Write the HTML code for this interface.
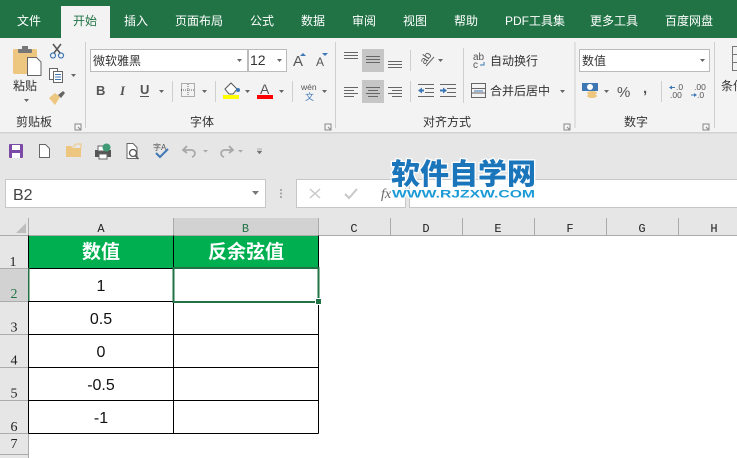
<!DOCTYPE html>
<html><head><meta charset="utf-8"><style>
html,body{margin:0;padding:0;width:737px;height:458px;overflow:hidden;background:#fff}
svg{display:block;font-family:"Liberation Sans","Noto Sans CJK SC",sans-serif}
.t{fill:#fff;font-size:12px}
.l{fill:#333;font-size:12px}
.h{fill:#222;font-family:"Liberation Mono",monospace;font-size:12px;text-anchor:middle}
.r{fill:#222;font-family:"Liberation Serif",serif;font-size:14px;text-anchor:middle}
.c{fill:#111;font-size:16px;text-anchor:middle}
.g{fill:#666}
.s{stroke:#666;stroke-width:1;fill:none}
</style></head><body>
<svg width="737" height="458" viewBox="0 0 737 458" xmlns="http://www.w3.org/2000/svg">
<!-- tabs -->
<rect width="737" height="38" fill="#217346"/>
<rect x="61" y="6" width="49" height="32" fill="#f3f3f3"/>
<text class="t" x="17" y="25">文件</text>
<text class="t" x="73" y="25" style="fill:#217346">开始</text>
<text class="t" x="124" y="25">插入</text>
<text class="t" x="175" y="25">页面布局</text>
<text class="t" x="250" y="25">公式</text>
<text class="t" x="301" y="25">数据</text>
<text class="t" x="352" y="25">审阅</text>
<text class="t" x="403" y="25">视图</text>
<text class="t" x="454" y="25">帮助</text>
<text class="t" x="505" y="25">PDF工具集</text>
<text class="t" x="590" y="25">更多工具</text>
<text class="t" x="665" y="25">百度网盘</text>
<!-- ribbon -->
<rect y="38" width="737" height="94" fill="#f3f3f3"/>
<rect y="132" width="737" height="86" fill="#e6e6e6"/>
<rect y="132" width="737" height="1.500" fill="#d2d2d2"/>
<g fill="#cfcfcf">
<rect x="85" y="42" width="1" height="86"/><rect x="335" y="42" width="1" height="86"/><rect x="574.500" y="42" width="1" height="86"/><rect x="714" y="42" width="1" height="86"/>
<rect x="410" y="50" width="1" height="21"/><rect x="410" y="81" width="1" height="21"/><rect x="463" y="48" width="1" height="55"/>
<rect x="172" y="81" width="1" height="21"/><rect x="215" y="81" width="1" height="21"/><rect x="292" y="81" width="1" height="21"/><rect x="661" y="81" width="1" height="21"/>
</g>
<!-- clipboard -->
<rect x="13" y="49" width="24" height="25" rx="1.500" fill="#edc77f"/>
<rect x="18" y="49" width="14" height="4" rx="1" fill="#777"/><rect x="22" y="46" width="6" height="4" fill="#777"/>
<path d="M27.500 57.500h9l4.500 4.500v13.500H27.500z" fill="#fff" stroke="#666"/>
<text class="l" x="13" y="90">粘贴</text>
<path d="M24 99h5l-2.500 3z" class="g"/>
<circle cx="53" cy="55.500" r="2.500" fill="none" stroke="#3f77b5" stroke-width="1.200"/><circle cx="61" cy="55.500" r="2.500" fill="none" stroke="#3f77b5" stroke-width="1.200"/>
<path d="M54 53l7-9M60 53l-7-9" stroke="#555" stroke-width="1.500" fill="none"/>
<rect x="49.500" y="68.500" width="8" height="11" fill="#fff" stroke="#666"/><rect x="53.500" y="71.500" width="9" height="11" fill="#fff" stroke="#666"/>
<path d="M55 74.500h6M55 77h6M55 79.500h6" stroke="#3f77b5"/>
<path d="M71 74h5l-2.500 3z" class="g"/>
<path d="M49 98l6-5 5 4-5 8z" fill="#edc77f"/><path d="M58 95l5-4 2 2-4 5z" fill="#666"/>
<text class="l" x="16" y="126">剪贴板</text>
<path d="M75 124h6v6h-6zM78 127l3 3" fill="none" stroke="#888"/>
<!-- font -->
<rect x="90.500" y="49.500" width="157" height="22" fill="#fff" stroke="#bbb"/>
<rect x="248.500" y="49.500" width="38" height="22" fill="#fff" stroke="#bbb"/>
<text class="l" x="93" y="65">微软雅黑</text>
<text class="l" x="250" y="65" style="font-size:14px">12</text>
<path d="M237 59h5l-2.500 3zM277 59h5l-2.500 3z" class="g"/>
<text x="293" y="66" style="font-size:15px;fill:#555">A</text><path d="M300 56h6l-3-3z" fill="#3f77b5"/>
<text x="316" y="66" style="font-size:12px;fill:#555">A</text><path d="M322 53h6l-3 3z" fill="#3f77b5"/>
<text x="96" y="95" style="font-size:13px;font-weight:bold;fill:#555">B</text>
<text x="120" y="95" style="font-size:13px;font-style:italic;font-family:'Liberation Serif';font-weight:bold;fill:#555">I</text>
<text x="140" y="94" style="font-size:13px;font-weight:bold;fill:#555">U</text><rect x="140" y="96" width="9" height="1" fill="#555"/>
<path d="M159 90h5l-2.500 3zM202 90h5l-2.500 3zM245 90h5l-2.500 3zM279 90h5l-2.500 3zM322 90h5l-2.500 3z" class="g"/>
<rect x="181.500" y="83.500" width="13" height="13" fill="none" stroke="#666" stroke-dasharray="1 1"/><path d="M188 84v13M181 90h14" stroke="#666" stroke-dasharray="1 1"/>
<path d="M225 89l6-6 6 6-4 5h-4z" fill="#fff" stroke="#555"/><circle cx="238" cy="90" r="2" fill="#3f77b5"/>
<rect x="223" y="95" width="16" height="4" fill="#ffff00"/>
<text x="260" y="94" style="font-size:14px;fill:#555">A</text><rect x="257" y="95" width="16" height="4" fill="#f00"/>
<text x="301" y="90" style="font-size:8.500px;fill:#555">wén</text>
<text x="305" y="100" style="font-size:9px;fill:#3f77b5">文</text>
<text class="l" x="190" y="126">字体</text>
<!-- Align -->
<rect x="362" y="49" width="22" height="23" fill="#c6c6c6"/><rect x="362" y="80" width="22" height="23" fill="#c6c6c6"/>
<path d="M344 52.500h14M344 55.500h14M344 58.500h14M366 56.500h14M366 59.500h14M366 62.500h14M388 61.500h14M388 64.500h14M388 67.500h14" class="s"/>
<path d="M344 87.500h14M344 90.500h10M344 93.500h14M344 96.500h10M366 87.500h14M368 90.500h10M366 93.500h14M368 96.500h10M388 87.500h14M392 90.500h10M388 93.500h14M392 96.500h10" class="s"/>
<text x="0" y="0" transform="translate(425 65) rotate(-55)" style="font-size:11px;fill:#555">ab</text>
<path d="M426 66l8-9" stroke="#666" fill="none"/><path d="M438 59h5l-2.500 3z" class="g"/>
<path d="M418 84.500h16M425 88.500h9M425 92.500h9M418 96.500h16M440 84.500h16M447 88.500h9M447 92.500h9M440 96.500h16" class="s"/>
<path d="M418 90.500l4-3v6zM422 89.500h2v2h-2zM447 90.500l-4-3v6zM440 89.500h3v2h-3z" fill="#3f77b5"/>
<text x="473" y="60" style="font-size:10px;fill:#555">ab</text><text x="473" y="68" style="font-size:10px;fill:#555">c</text><path d="M480 65h4v-3" stroke="#3f77b5" fill="none"/>
<text class="l" x="490" y="65">自动换行</text>
<rect x="471.500" y="83.500" width="14" height="14" fill="none" stroke="#666"/><path d="M472 88.500h13M472 93h13" stroke="#666"/><path d="M474 91h9" stroke="#3f77b5"/>
<text class="l" x="490" y="95">合并后居中</text>
<path d="M560 90h5l-2.500 3z" class="g"/>
<text class="l" x="423" y="126">对齐方式</text>
<path d="M325 124h6v6h-6zM328 127l3 3M564 124h6v6h-6zM567 127l3 3M703 124h6v6h-6zM706 127l3 3" fill="none" stroke="#888"/>
<!-- number -->
<rect x="579.500" y="49.500" width="130" height="22" fill="#fff" stroke="#bbb"/>
<text class="l" x="582" y="65">数值</text><path d="M700 59h5l-2.500 3z" class="g"/>
<rect x="582" y="83" width="16" height="8" fill="#3f77b5"/><circle cx="590" cy="87" r="3" fill="#fff"/>
<ellipse cx="592" cy="93" rx="5" ry="2" fill="#edc77f"/><ellipse cx="592" cy="96" rx="5" ry="2" fill="#edc77f"/>
<path d="M604 90h5l-2.500 3z" class="g"/>
<text x="617" y="97" style="font-size:15px;fill:#555">%</text>
<text x="643" y="93" style="font-size:15px;font-weight:bold;fill:#555">,</text>
<text x="676" y="90" style="font-size:8.500px;fill:#555">.0</text><text x="670" y="98" style="font-size:8.500px;fill:#555">.00</text>
<text x="694" y="90" style="font-size:8.500px;fill:#555">.00</text><text x="697" y="98" style="font-size:8.500px;fill:#555">.0</text>
<path d="M669 87.500l3-2v4zM697 95l-3-2v4z" fill="#3f77b5"/><path d="M672 87.500h3M691 95h4" stroke="#3f77b5"/>
<text class="l" x="624" y="126">数字</text>
<rect x="732.500" y="46.500" width="10" height="24" fill="none" stroke="#777"/><path d="M732 54.500h10M732 62.500h10" stroke="#777"/>
<text class="l" x="721" y="90">条件</text>
<!-- QAT -->
<rect x="9" y="144" width="14" height="14" rx="1" fill="#7d4aa6"/><rect x="12" y="145" width="8" height="5" fill="#fff"/><rect x="12" y="153" width="8" height="5" fill="#fff"/>
<path d="M39.500 144.500h6l4 4v9h-10z" fill="#fff" stroke="#666"/>
<path d="M66 157v-11h5l2 2h7l1 0v9z" fill="#edc77f"/><path d="M73 147l3-3h5v5" fill="none" stroke="#edc77f"/>
<rect x="95" y="150" width="16" height="7" fill="#555"/><rect x="98" y="146" width="9" height="5" fill="#fff" stroke="#666"/><rect x="99" y="154" width="8" height="5" fill="#fff" stroke="#666"/><circle cx="106.500" cy="147.500" r="4" fill="#3f9a75"/>
<path d="M127 143.500h6l4 4v11h-10z" fill="#fff" stroke="#666"/><circle cx="133" cy="153" r="3.500" fill="#fff" stroke="#555" stroke-width="1.300"/><path d="M135.500 156l3 3" stroke="#555" stroke-width="1.500"/>
<text x="153" y="150" style="font-size:8px;fill:#555">字A</text><path d="M156 153l4 4 8-8" fill="none" stroke="#3f77b5" stroke-width="2"/>
<path d="M187 146l-4 4 4 3M183 150h8c5 0 5 6 1 7" fill="none" stroke="#a8a8a8" stroke-width="1.800"/>
<path d="M229 146l4 4-4 3M233 150h-8c-5 0-5 6-1 7" fill="none" stroke="#a8a8a8" stroke-width="1.800"/>
<path d="M203 150h5l-2.500 2.500zM238 150h5l-2.500 2.500z" fill="#a8a8a8"/>
<path d="M257 149h5M257 151h5l-2.500 3z" fill="#777" stroke="#777" stroke-width=".5"/>
<!-- Name box / formula -->
<rect x="5.500" y="179.500" width="260" height="28" fill="#fff" stroke="#c6c6c6"/>
<text x="13" y="200" style="font-size:16px;fill:#444">B2</text>
<path d="M252 191h7l-3.500 4z" fill="#777"/>
<path d="M280 189h2v2h-2zM280 192.500h2v2h-2zM280 196h2v2h-2z" fill="#aaa"/>
<rect x="296.500" y="179.500" width="109" height="28" fill="#fff" stroke="#c6c6c6"/>
<rect x="409.500" y="179.500" width="330" height="28" fill="#fff" stroke="#c6c6c6"/>
<path d="M310 189l10 9M320 189l-10 9" stroke="#c8c8c8" stroke-width="1.500" fill="none"/>
<path d="M345 194l4 4 8-9" stroke="#c8c8c8" stroke-width="2" fill="none"/>
<text x="381" y="198" style="font-size:14px;font-style:italic;font-family:'Liberation Serif';fill:#666">fx</text>
<!-- Watermark -->
<text x="391" y="184" textLength="145" lengthAdjust="spacingAndGlyphs" style="font-size:29px;font-weight:900;fill:#1a75bb;stroke:#fff;stroke-width:2.500px;paint-order:stroke;font-family:'Noto Sans CJK SC',sans-serif">软件自学网</text>
<text x="392" y="197.500" textLength="143" lengthAdjust="spacingAndGlyphs" style="font-size:11px;font-weight:bold;fill:#1a9ad6;stroke:#fff;stroke-width:2px;paint-order:stroke">WWW.RJZXW.COM</text>
<!-- Grid header -->
<rect y="218" width="737" height="18" fill="#e6e6e6"/>
<rect y="236" width="28" height="222" fill="#e6e6e6"/>
<rect x="173" y="218" width="146" height="17" fill="#d2d2d2"/>
<rect y="268" width="28" height="33" fill="#d2d2d2"/>
<rect y="235" width="737" height="1" fill="#ababab"/>
<rect x="28" y="218" width="1" height="240" fill="#ababab"/>
<path d="M16 233l10-10v10z" fill="#bdbdbd"/>
<path d="M173.500 218v17M318.500 218v17M390.500 218v17M462.500 218v17M534.500 218v17M606.500 218v17M678.500 218v17M0 268.500h28M0 301.500h28M0 334.500h28M0 367.500h28M0 400.500h28M0 433.500h28M0 454.500h28" stroke="#ababab" fill="none"/>
<text class="h" x="101" y="232">A</text><text class="h" x="245.500" y="232" style="fill:#217346">B</text>
<text class="h" x="354" y="232">C</text><text class="h" x="426" y="232">D</text><text class="h" x="498" y="232">E</text><text class="h" x="570" y="232">F</text><text class="h" x="642" y="232">G</text><text class="h" x="714" y="232">H</text>
<text class="r" x="13" y="266">1</text><text class="r" x="14" y="298" style="fill:#217346">2</text><text class="r" x="14" y="331.500">3</text><text class="r" x="14" y="364.500">4</text><text class="r" x="14" y="397.500">5</text><text class="r" x="14" y="431">6</text><text class="r" x="14" y="448">7</text>
<!-- Table -->
<rect x="29" y="236" width="289" height="32" fill="#00b050"/>
<path d="M28.500 235.500V433.500M173.500 235.500V433.500M318.500 235.500V433.500M28.500 268.500H318.500M28.500 301.500H318.500M28.500 334.500H318.500M28.500 367.500H318.500M28.500 400.500H318.500M28.500 433.500H318.500" stroke="#000" fill="none"/>
<text x="82" y="258" style="font-size:19px;font-weight:bold;fill:#fff;font-family:'Noto Sans CJK SC',sans-serif">数值</text>
<text x="208" y="258" style="font-size:19px;font-weight:bold;fill:#fff;font-family:'Noto Sans CJK SC',sans-serif">反余弦值</text>
<text class="c" x="101" y="291">1</text><text class="c" x="101" y="324">0.5</text><text class="c" x="101" y="357">0</text><text class="c" x="101" y="390">-0.5</text><text class="c" x="101" y="423">-1</text>
<rect x="173.500" y="268" width="145" height="34" fill="#fff" stroke="#217346" stroke-width="2"/>
<rect x="28" y="268" width="1.500" height="33" fill="#217346"/>
<rect x="315.500" y="298.500" width="6" height="6" fill="#217346" stroke="#fff"/>
</svg>
</body></html>
